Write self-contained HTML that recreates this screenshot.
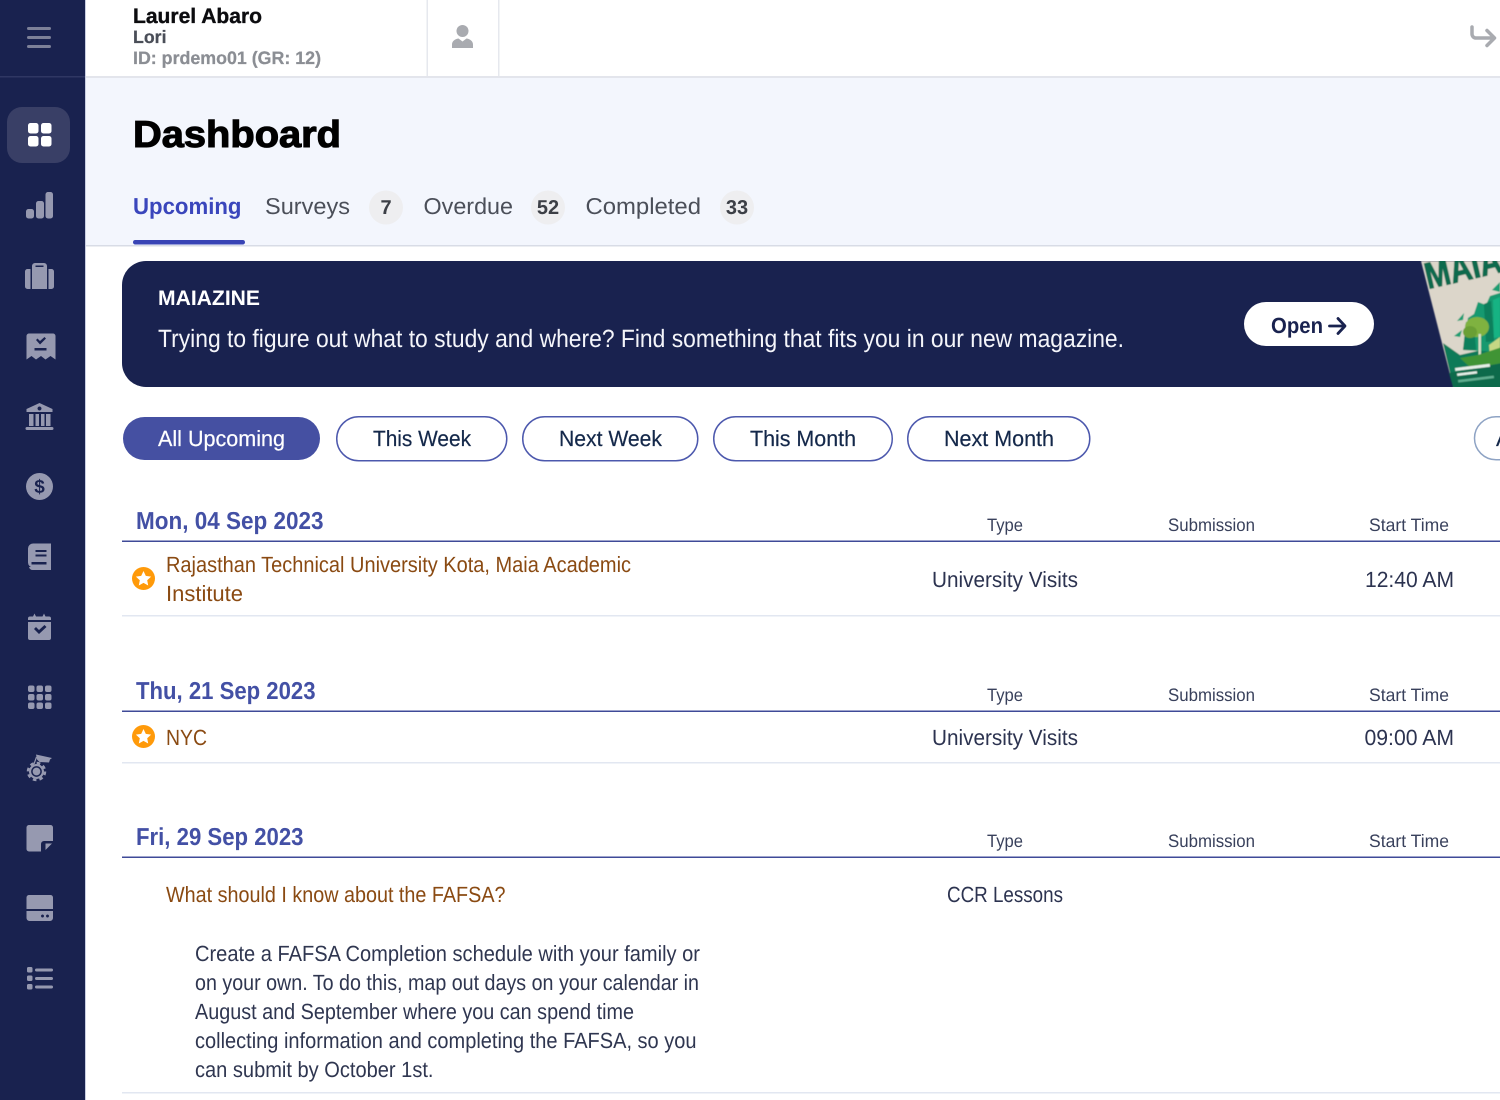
<!DOCTYPE html>
<html lang="en"><head><meta charset="utf-8"><title>Dashboard</title>
<style>
html,body{margin:0;padding:0;width:1500px;height:1100px;overflow:hidden;background:#fff}
svg{display:block}
text{font-family:"Liberation Sans",Arial,sans-serif;text-rendering:geometricPrecision}
.b{font-weight:700}
.d{font-size:24.5px;fill:#4350a5;font-weight:700}
.h{font-size:18px;fill:#39415c}
.t{font-size:22px;fill:#2c3350}
.o{font-size:22px;fill:#8a4a12}
.p{font-size:22px;fill:#2f3650}
.f{font-size:22px;fill:#14284a;stroke:#14284a;stroke-width:.2}
.tab{font-size:23px;fill:#4b4f59}
.c{font-size:20px;font-weight:700;fill:#3c3f46}
</style></head><body>
<svg width="1500" height="1100" viewBox="0 0 1500 1100" xmlns="http://www.w3.org/2000/svg">
<defs><filter id="bl" x="-10%" y="-10%" width="120%" height="120%"><feGaussianBlur stdDeviation="0.6"/></filter>
<clipPath id="ban"><path d="M146 261H1500V387H146a24 24 0 0 1-24-24V285a24 24 0 0 1 24-24z"/></clipPath></defs>
<rect width="1500" height="1100" fill="#fff"/>
<!-- top band -->
<rect x="85" y="77" width="1415" height="168" fill="#f3f6fd"/>
<rect x="85" y="76" width="1415" height="2" fill="#e3e5ec"/>
<rect x="426.500" y="0" width="1.500" height="76" fill="#e6e8ee"/>
<rect x="498" y="0" width="1.500" height="76" fill="#e6e8ee"/>
<rect x="85" y="245" width="1415" height="1.500" fill="#d8dce6"/>
<!-- sidebar -->
<rect width="85" height="1100" fill="#19224f"/>
<rect x="85" width="1" height="1100" fill="#c9cee2"/>
<rect y="76" width="85" height="1.500" fill="#2f3763"/>
<g fill="#7c8098"><rect x="27" y="27" width="24" height="3" rx="1.500"/><rect x="27" y="36" width="24" height="3" rx="1.500"/><rect x="27" y="45" width="24" height="3" rx="1.500"/></g>
<rect x="7" y="107" width="63" height="56" rx="15" fill="#393f66"/>
<g fill="#fff"><rect x="28" y="123" width="10.500" height="10.500" rx="2.500"/><rect x="41" y="123" width="10.500" height="10.500" rx="2.500"/><rect x="28" y="136" width="10.500" height="10.500" rx="2.500"/><rect x="41" y="136" width="10.500" height="10.500" rx="2.500"/></g>
<g fill="#9699b0">
<!-- bars -->
<rect x="26" y="209" width="8" height="9.500" rx="2.500"/><rect x="36" y="201" width="8" height="17.500" rx="2.500"/><rect x="45.500" y="192" width="7.500" height="26.500" rx="2.500"/>
<!-- briefcase -->
<path d="M27.500 269h3v20h-3a2.500 2.500 0 0 1-2.500-2.500v-15a2.500 2.500 0 0 1 2.500-2.500zM48.500 269h3a2.500 2.500 0 0 1 2.500 2.500v15a2.500 2.500 0 0 1-2.500 2.500h-3z"/>
<path fill-rule="evenodd" d="M32 269v-3a3 3 0 0 1 3-3h9a3 3 0 0 1 3 3v23H32zM35.500 265.500v1.500h8v-1.500z"/>
<!-- ticket/bookmark -->
<path fill-rule="evenodd" d="M29 333.500h24a2.500 2.500 0 0 1 2.500 2.500v23.500l-5-3.500-5 3.500-4.500-3.500-5 3.500-4.500-3.500-5 3.500V336a2.500 2.500 0 0 1 2.500-2.500zM34.500 348v2.500h12V348zM36 340l1.500-1.500 2.500 2.500 4.500-4 1.500 1.500-6 6z"/>
<!-- bank -->
<path d="M39.500 403l13 6v3h-26v-3zM29 414h4.500v12H29zM35.500 414h3.500v12h-3.500zM41 414h3.500v12H41zM46 414h4.500v12H46zM27 427h25a1.500 1.500 0 0 1 0 3H27a1.500 1.500 0 0 1 0-3z"/>
<!-- dollar -->
<circle cx="39.500" cy="486.500" r="13.500"/>
<!-- book -->
<path fill-rule="evenodd" d="M33 543.500h18v24H33a5 5 0 0 1-5-5v-14a5 5 0 0 1 5-5zM35.500 550v2h11v-2zM35.500 554.500v2h11v-2zM31.500 562v2.500h15V562z"/>
<path d="M46 567h5v3h-18a4 4 0 0 1-4-3z"/>
<!-- calendar -->
<path fill-rule="evenodd" d="M28 620h23v-1.500a2 2 0 0 0-2-2h-3.500l-1.500-3-1.500 3h-6.500l-1.500-3-1.500 3H30a2 2 0 0 0-2 2zM28 622v16a2 2 0 0 0 2 2h19a2 2 0 0 0 2-2v-16zM34 629l2-2 3 3 5.500-5 2 2-7.500 7z"/>
<!-- nine dots -->
<rect x="28" y="685.500" width="6.500" height="6.500" rx="2"/><rect x="36.500" y="685.500" width="6.500" height="6.500" rx="2"/><rect x="45" y="685.500" width="6.500" height="6.500" rx="2"/>
<rect x="28" y="694" width="6.500" height="6.500" rx="2"/><rect x="36.500" y="694" width="6.500" height="6.500" rx="2"/><rect x="45" y="694" width="6.500" height="6.500" rx="2"/>
<rect x="28" y="702.500" width="6.500" height="6.500" rx="2"/><rect x="36.500" y="702.500" width="6.500" height="6.500" rx="2"/><rect x="45" y="702.500" width="6.500" height="6.500" rx="2"/>
<!-- grad gear -->
<path d="M36 754.500l16 3.500-2 1.500-1 3-9.500-.5-2.500-2.500z"/>
<path d="M36.500 757l-2.500 7" stroke="#9699b0" stroke-width="1.200" fill="none"/>
<circle cx="36.500" cy="771.500" r="7.500"/>
<circle cx="36.500" cy="771.500" r="8.500" fill="none" stroke="#9699b0" stroke-width="2.500" stroke-dasharray="3.600 3.070"/>
<circle cx="36.500" cy="771.500" r="4.600" fill="none" stroke="#19224f" stroke-width="1.500"/>
<!-- note -->
<path fill-rule="evenodd" d="M29 825h21.500a2.500 2.500 0 0 1 2.500 2.500v13.500h-9a3 3 0 0 0-3 3v7.500H29a2.500 2.500 0 0 1-2.500-2.500v-21.500a2.500 2.500 0 0 1 2.500-2.500z"/>
<path d="M45.500 843.500H52l-6.500 6.500z"/>
<!-- drive -->
<path d="M29 895h21.500a2.500 2.500 0 0 1 2.500 2.500v11.500H26.500v-11.500a2.500 2.500 0 0 1 2.500-2.500z"/>
<path fill-rule="evenodd" d="M26.500 911H53v7a3 3 0 0 1-3 3H29.500a3 3 0 0 1-3-3zM42.500 914.500a1.500 1.500 0 1 0 .01 0zM47.500 914.500a1.500 1.500 0 1 0 .01 0z"/>
<!-- list -->
<rect x="27" y="967" width="5.500" height="5.500" rx="1.500"/><rect x="27" y="975.500" width="5.500" height="5.500" rx="1.500"/><rect x="27" y="984" width="5.500" height="5.500" rx="1.500"/>
<rect x="35" y="968.500" width="18" height="3" rx="1.500"/><rect x="35" y="977" width="18" height="3" rx="1.500"/><rect x="35" y="985.500" width="18" height="3" rx="1.500"/>
</g>
<path d="M39.500 406.500a2 2 0 1 0 .01 0z" fill="#19224f"/>
<text x="39.500" y="493" text-anchor="middle" class="b" font-size="19" fill="#19224f">$</text>
<!-- header text -->
<text x="133" y="23" class="b" font-size="21" fill="#0c0c0f" stroke="#0c0c0f" stroke-width=".35" textLength="129" lengthAdjust="spacingAndGlyphs">Laurel Abaro</text>
<text x="133" y="43" class="b" font-size="18" fill="#4a4e58" stroke="#4a4e58" stroke-width=".25" textLength="33.500" lengthAdjust="spacingAndGlyphs">Lori</text>
<text x="133" y="64" class="b" font-size="18" fill="#8b8e94" stroke="#8b8e94" stroke-width=".25" textLength="188" lengthAdjust="spacingAndGlyphs">ID: prdemo01 (GR: 12)</text>
<g fill="#a9abb0"><circle cx="462.500" cy="31" r="6"/><path d="M452 48v-3.500c0-3 2.500-5.500 6.500-6l4 3 4-3c4 .5 6.500 3 6.500 6V48z"/></g>
<path d="M1472 27v7a4 4 0 0 0 4 4h18M1487 30.500l7.500 7.500-7.500 7.500" fill="none" stroke="#a9abb0" stroke-width="3.500" stroke-linecap="round" stroke-linejoin="round"/>
<text x="133" y="147" class="b" font-size="37.500" fill="#000" stroke="#000" stroke-width="1.100" textLength="208" lengthAdjust="spacingAndGlyphs">Dashboard</text>
<!-- tabs -->
<text x="133" y="214" class="tab b" style="fill:#3a46bc" textLength="108.500" lengthAdjust="spacingAndGlyphs">Upcoming</text>
<text x="265" y="214" class="tab" textLength="85" lengthAdjust="spacingAndGlyphs">Surveys</text>
<text x="423.500" y="214" class="tab" textLength="89.500" lengthAdjust="spacingAndGlyphs">Overdue</text>
<text x="585.500" y="214" class="tab" textLength="115.500" lengthAdjust="spacingAndGlyphs">Completed</text>
<g fill="#eeeef0"><circle cx="386" cy="207.500" r="17"/><circle cx="548" cy="207.500" r="17"/><circle cx="737" cy="207.500" r="17"/></g>
<text x="386" y="214" text-anchor="middle" class="c">7</text>
<text x="548" y="214" text-anchor="middle" class="c">52</text>
<text x="737" y="214" text-anchor="middle" class="c">33</text>
<rect x="133" y="240" width="112" height="4.500" rx="2.200" fill="#3844b5"/>
<!-- banner -->
<g clip-path="url(#ban)">
<rect x="122" y="261" width="1378" height="126" fill="#19224f"/>
<g filter="url(#bl)">
<path d="M1421 261H1503V390H1454z" fill="#dcd6ca"/>
<text x="1428" y="289" class="b" font-size="37" fill="#0d6a4e" stroke="#0d6a4e" stroke-width="1" transform="rotate(-13 1428 289)" textLength="96" lengthAdjust="spacingAndGlyphs">MAIAZ</text>
<path d="M1443 343L1460 355 1503 345V390H1454z" fill="#0e7a58"/>
<path d="M1463 350L1468 318 1474 314 1478 302 1486 305 1490 296 1503 292V352z" fill="#12996f"/>
<path d="M1463 350L1466 322 1474 326 1476 350z" fill="#0f7f5c"/>
<path d="M1484 304l7-3 3 40-8 1z" fill="#0c7f5c"/>
<path d="M1493 300l7-3v40l-6 1z" fill="#17b383"/>
<ellipse cx="1477" cy="327" rx="12" ry="10" fill="#7fb23f"/>
<ellipse cx="1470" cy="332" rx="7" ry="6" fill="#6a9f35"/>
<rect x="1478.500" y="334" width="2.500" height="22" fill="#d6dfc6"/>
<path d="M1489 345l11-8v19l-10 3z" fill="#c6d884"/>
<path d="M1460 358l18-3 24-8v16l-30 6z" fill="#3f9436"/>
<path d="M1453 387l-4-14 54-10v27z" fill="#0c6a4c"/>
<path d="M1492 290l8-8v10z" fill="#1c9e72"/>
<path d="M1457 321l7-8-1 7z" fill="#1c9e72"/>
<path d="M1454 336l8-6-2 7z" fill="#1c9e72"/>
<rect x="1455" y="368" width="35" height="3" fill="#e6efe8" transform="rotate(-7 1455 368)"/>
<rect x="1457" y="373.500" width="20" height="2.500" fill="#e6efe8" transform="rotate(-7 1457 373.500)"/>
<rect x="1458" y="380" width="36" height="2.500" fill="#5fae90" transform="rotate(-7 1458 380)"/>
</g>
</g>
<text x="158" y="305" class="b" font-size="21" fill="#fff" textLength="102" lengthAdjust="spacingAndGlyphs">MAIAZINE</text>
<text x="158" y="347" font-size="25" fill="#f4f5fa" textLength="966" lengthAdjust="spacingAndGlyphs">Trying to figure out what to study and where? Find something that fits you in our new magazine.</text>
<rect x="1244" y="302" width="130" height="44" rx="22" fill="#fff"/>
<text x="1271" y="333" class="b" font-size="22" fill="#19224f" textLength="52" lengthAdjust="spacingAndGlyphs">Open</text>
<path d="M1329.500 326h15M1338 318.500l7 7.500-7 7.500" fill="none" stroke="#19224f" stroke-width="2.800" stroke-linecap="round" stroke-linejoin="round"/>
<!-- filters -->
<rect x="123" y="417" width="197" height="43" rx="21.500" fill="#4550a2"/>
<text x="158" y="446" class="f" style="fill:#fff;stroke:#fff" textLength="127" lengthAdjust="spacingAndGlyphs">All Upcoming</text>
<g fill="#fff" stroke="#4c58ad" stroke-width="1.500">
<rect x="336.750" y="416.750" width="170" height="44" rx="22"/>
<rect x="522.750" y="416.750" width="175" height="44" rx="22"/>
<rect x="713.750" y="416.750" width="178.500" height="44" rx="22"/>
<rect x="907.750" y="416.750" width="182" height="44" rx="22"/>
</g>
<rect x="1474.500" y="416.750" width="60" height="43" rx="21.500" fill="#fff" stroke="#8ea3c4" stroke-width="1.500"/>
<text x="373" y="446" class="f" textLength="98" lengthAdjust="spacingAndGlyphs">This Week</text>
<text x="559" y="446" class="f" textLength="103" lengthAdjust="spacingAndGlyphs">Next Week</text>
<text x="750" y="446" class="f" textLength="106" lengthAdjust="spacingAndGlyphs">This Month</text>
<text x="944" y="446" class="f" textLength="110" lengthAdjust="spacingAndGlyphs">Next Month</text>
<text x="1496" y="446" class="f">A</text>
<!-- group 1 -->
<text x="136" y="529" class="d" textLength="187.500" lengthAdjust="spacingAndGlyphs">Mon, 04 Sep 2023</text>
<text x="987" y="531" class="h" textLength="36" lengthAdjust="spacingAndGlyphs">Type</text>
<text x="1168" y="531" class="h" textLength="87" lengthAdjust="spacingAndGlyphs">Submission</text>
<text x="1369" y="531" class="h" textLength="80" lengthAdjust="spacingAndGlyphs">Start Time</text>
<rect x="122" y="540.500" width="1378" height="1.500" fill="#3f4a98"/>
<circle cx="143.500" cy="578.500" r="11.500" fill="#ff9a0a"/>
<path d="M143.500 571l2.300 4.900 5.300.7-3.900 3.600 1 5.300-4.700-2.600-4.700 2.600 1-5.300-3.900-3.600 5.300-.7z" fill="#fff"/>
<text x="166" y="572" class="o" textLength="465" lengthAdjust="spacingAndGlyphs">Rajasthan Technical University Kota, Maia Academic</text>
<text x="166" y="601" class="o" textLength="77" lengthAdjust="spacingAndGlyphs">Institute</text>
<text x="932" y="587" class="t" textLength="146" lengthAdjust="spacingAndGlyphs">University Visits</text>
<text x="1365" y="587" class="t" textLength="89" lengthAdjust="spacingAndGlyphs">12:40 AM</text>
<rect x="122" y="615" width="1378" height="1.500" fill="#e2e7f1"/>
<!-- group 2 -->
<text x="136" y="699" class="d" textLength="179.500" lengthAdjust="spacingAndGlyphs">Thu, 21 Sep 2023</text>
<text x="987" y="701" class="h" textLength="36" lengthAdjust="spacingAndGlyphs">Type</text>
<text x="1168" y="701" class="h" textLength="87" lengthAdjust="spacingAndGlyphs">Submission</text>
<text x="1369" y="701" class="h" textLength="80" lengthAdjust="spacingAndGlyphs">Start Time</text>
<rect x="122" y="710.500" width="1378" height="1.500" fill="#3f4a98"/>
<circle cx="143.500" cy="736.500" r="11.500" fill="#ff9a0a"/>
<path d="M143.500 729l2.300 4.900 5.300.7-3.900 3.600 1 5.300-4.700-2.600-4.700 2.600 1-5.300-3.900-3.600 5.300-.7z" fill="#fff"/>
<text x="166" y="745" class="o" textLength="41" lengthAdjust="spacingAndGlyphs">NYC</text>
<text x="932" y="745" class="t" textLength="146" lengthAdjust="spacingAndGlyphs">University Visits</text>
<text x="1364.500" y="745" class="t" textLength="89.500" lengthAdjust="spacingAndGlyphs">09:00 AM</text>
<rect x="122" y="762" width="1378" height="1.500" fill="#e2e7f1"/>
<!-- group 3 -->
<text x="136" y="845" class="d" textLength="167.500" lengthAdjust="spacingAndGlyphs">Fri, 29 Sep 2023</text>
<text x="987" y="847" class="h" textLength="36" lengthAdjust="spacingAndGlyphs">Type</text>
<text x="1168" y="847" class="h" textLength="87" lengthAdjust="spacingAndGlyphs">Submission</text>
<text x="1369" y="847" class="h" textLength="80" lengthAdjust="spacingAndGlyphs">Start Time</text>
<rect x="122" y="856.500" width="1378" height="1.500" fill="#3f4a98"/>
<text x="166" y="902" class="o" textLength="339.500" lengthAdjust="spacingAndGlyphs">What should I know about the FAFSA?</text>
<text x="947" y="902" class="t" textLength="116" lengthAdjust="spacingAndGlyphs">CCR Lessons</text>
<text x="195" y="961" class="p" textLength="505" lengthAdjust="spacingAndGlyphs">Create a FAFSA Completion schedule with your family or</text>
<text x="195" y="990" class="p" textLength="504" lengthAdjust="spacingAndGlyphs">on your own. To do this, map out days on your calendar in</text>
<text x="195" y="1019" class="p" textLength="439" lengthAdjust="spacingAndGlyphs">August and September where you can spend time</text>
<text x="195" y="1048" class="p" textLength="501.500" lengthAdjust="spacingAndGlyphs">collecting information and completing the FAFSA, so you</text>
<text x="195" y="1077" class="p" textLength="238.500" lengthAdjust="spacingAndGlyphs">can submit by October 1st.</text>
<rect x="122" y="1092" width="1378" height="1.500" fill="#e2e7f1"/>
</svg>
</body></html>
